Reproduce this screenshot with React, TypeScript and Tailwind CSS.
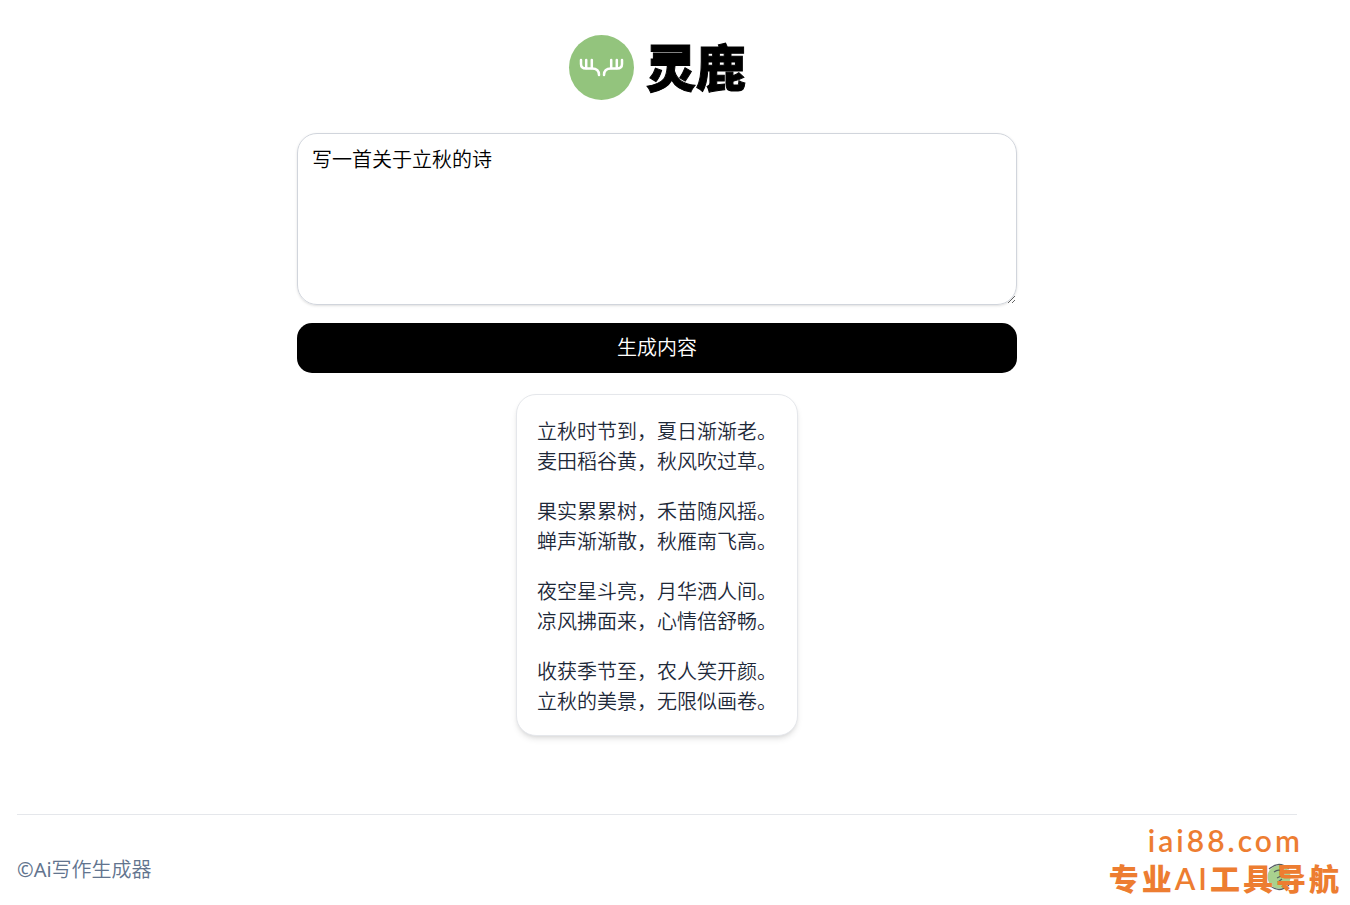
import { useState } from "react";

const poem = [
    ["立秋时节到，夏日渐渐老。", "麦田稻谷黄，秋风吹过草。"],
    ["果实累累树，禾苗随风摇。", "蝉声渐渐散，秋雁南飞高。"],
    ["夜空星斗亮，月华洒人间。", "凉风拂面来，心情倍舒畅。"],
    ["收获季节至，农人笑开颜。", "立秋的美景，无限似画卷。"],
];

function Logo() {
    return (
        <a href="#" className="flex items-center gap-3 text-black">
            <svg viewBox="0 0 66 66" className="size-[66px]" fill="none" aria-hidden="true">
                <circle cx="33.5" cy="32.5" r="32.5" fill="#93c47d" />
                <g stroke="#fff" strokeWidth="2.5" strokeLinecap="round" strokeLinejoin="round">
                    <path d="M13 25v4q0 4.500 5 4.500h6q7 0 7 6.500" />
                    <path d="M18.200 25v8M23.800 25v8" />
                    <path d="M54 25v4q0 4.500-5 4.500h-6q-7 0-7 6.500" />
                    <path d="M48.800 25v8M43.200 25v8" />
                </g>
            </svg>
            <span className="text-[50px] leading-[66px] font-black [-webkit-text-stroke:1px_black]">灵鹿</span>
        </a>
    );
}

export default function App() {
    const [prompt, setPrompt] = useState("写一首关于立秋的诗");

    return (
        <div
            lang="zh-CN"
            className="relative min-h-screen bg-white pl-[17px] pr-[53px] font-['Noto_Sans','Noto_Sans_CJK_SC',sans-serif] text-[20px] leading-[30px] font-[350]"
        >
            <div className="mx-auto flex max-w-7xl flex-col">
                <header className="flex justify-center pt-[35px]">
                    <Logo />
                </header>

                <main className="mx-auto mt-8 flex w-full max-w-[720px] flex-col items-center">
                    <textarea
                        aria-label="写作内容"
                        rows={5}
                        value={prompt}
                        onChange={(e) => setPrompt(e.target.value)}
                        className="block w-full rounded-[20px] border border-gray-300 px-3.5 pt-[11px] pb-[9px] text-black shadow-sm outline-none"
                    />
                    <button
                        type="button"
                        className="mt-[18px] w-full rounded-[15px] bg-black py-2.5 text-white hover:bg-black/80"
                    >
                        生成内容
                    </button>

                    {/* Generated result */}
                    <article className="mt-[21px] flex flex-col gap-5 rounded-[20px] border border-gray-200 bg-white px-5 pt-[22px] pb-[18px] text-gray-800 shadow-md">
                        {poem.map((lines) => (
                            <p key={lines[0]}>
                                {lines.map((line) => (
                                    <span key={line} className="block">
                                        {line}
                                    </span>
                                ))}
                            </p>
                        ))}
                    </article>
                </main>

                <footer className="mt-[78px] flex items-start justify-between border-t border-gray-200 pt-10 text-slate-500">
                    <p>
                        <span className="font-normal">©Ai</span>写作生成器
                    </p>
                    <a href="#" aria-label="灵鹿" className="mt-2 mr-1">
                        <svg viewBox="0 0 28 28" className="size-7" fill="none" aria-hidden="true">
                            <circle cx="14" cy="14" r="11.500" fill="#a9d18e" />
                            <path d="M4 6Q14-3 24 6M4 22Q14 31 24 22" stroke="#555f64" strokeWidth="1.2" />
                            <path d="M9 9q4-3 8-1M12 15l4-2M13 19l4-3" stroke="#555f64" strokeWidth="1.2" />
                        </svg>
                    </a>
                </footer>
            </div>

            {/* Site mark, floats over the footer */}
            <div className="absolute right-2 bottom-2 text-center font-['Lato','Noto_Sans_CJK_SC',sans-serif] text-[#ed7d31]">
                <p className="text-[30px] leading-[38px] font-semibold tracking-widest">iai88.com</p>
                <p className="text-[30px] leading-[38px] font-black tracking-widest">
                    专业<span className="font-semibold">AI</span>工具导航
                </p>
            </div>
        </div>
    );
}
